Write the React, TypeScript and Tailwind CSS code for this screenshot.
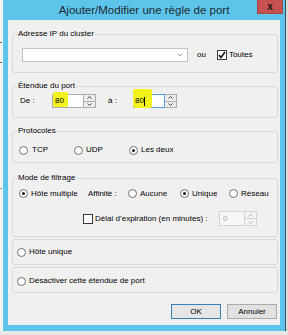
import React from "react";

function Radio({ checked }: { checked?: boolean }) {
  return (
    <span className="w-[9px] h-[9px] rounded-full border border-[#707070] bg-white flex items-center justify-center shrink-0">
      {checked ? <span className="w-[3px] h-[3px] rounded-full bg-[#1b1b1b]" /> : null}
    </span>
  );
}

function Check({ checked }: { checked?: boolean }) {
  return (
    <span className="w-[10px] h-[10px] border border-[#3a3a3a] bg-white flex items-center justify-center shrink-0">
      {checked ? (
        <svg width="8" height="8" viewBox="0 0 8 8">
          <polyline points="1,4 3,6.5 7,1" fill="none" stroke="#111" strokeWidth="1.6" />
        </svg>
      ) : null}
    </span>
  );
}

function Chev({ up, color }: { up?: boolean; color: string }) {
  return (
    <svg width="5" height="3" viewBox="0 0 5 3">
      <polyline
        points={up ? "0.5,2.5 2.5,0.5 4.5,2.5" : "0.5,0.5 2.5,2.5 4.5,0.5"}
        fill="none"
        stroke={color}
        strokeWidth="1"
      />
    </svg>
  );
}

function SpinButtons({ disabled }: { disabled?: boolean }) {
  const c = disabled ? "#b5b5b5" : "#404040";
  return (
    <div
      className={
        disabled
          ? "w-[12px] flex flex-col border border-l-0 border-[#d5d5d5] bg-[#f4f4f4]"
          : "w-[12px] flex flex-col border border-l-0 border-[#acacac] bg-[#ececec]"
      }
    >
      <div
        className={
          disabled
            ? "flex-1 flex items-center justify-center border-b border-[#d5d5d5]"
            : "flex-1 flex items-center justify-center border-b border-[#acacac]"
        }
      >
        <Chev up color={c} />
      </div>
      <div className="flex-1 flex items-center justify-center">
        <Chev color={c} />
      </div>
    </div>
  );
}

function Box({ className, label, children }: { className: string; label?: string; children?: React.ReactNode }) {
  return (
    <div className={"relative border border-[#d9d9d9] rounded-[3px] " + className}>
      {label ? (
        <span className="absolute -top-[6px] left-[4px] px-px bg-[#f0f0f0] leading-[9px]">{label}</span>
      ) : null}
      {children}
    </div>
  );
}

export default function App() {
  return (
    <div className="w-[288px] h-[335px] bg-[#e6e6e6] flex overflow-hidden font-['Liberation_Sans',Arial,sans-serif]">
      <div className="w-[3px] h-[331px] bg-[#f6f6f6] flex flex-col">
        <div className="mt-[42px] h-px w-[2px] bg-[#6a6a6a]" />
        <div className="mt-[19px] h-px w-[2px] bg-[#6a6a6a]" />
        <div className="mt-[125px] h-px w-[2px] bg-[#8a8a8a]" />
      </div>
      <div className="w-[282px] h-[331px] bg-[#5cc5e9] flex flex-col">
        <div className="relative h-[20px] flex items-center justify-center">
          <span className="text-[11.5px] leading-[20px] text-[#1c2935]">Ajouter/Modifier une règle de port</span>
          <div className="absolute right-[2px] top-0 w-[26px] h-[14px] bg-[#c75050] border border-t-0 border-[#a94545] flex items-center justify-center">
            <span className="text-[10px] leading-[10px] font-bold text-[#161616]">x</span>
          </div>
        </div>
        <div className="mx-[5px] h-[305px] bg-[#f0f0f0] flex flex-col pl-[4px] pr-[2px] text-[8px] leading-[10px] text-black">
          <Box className="mt-[14px] h-[39px] pt-[13px] pl-[9px]" label="Adresse IP du cluster">
            <div className="flex items-center h-[14px]">
              <div className="w-[166px] h-[14px] border border-[#c3c3c3] bg-white flex items-center justify-end pr-[4px]">
                <svg width="6" height="4" viewBox="0 0 6 4">
                  <polyline points="0.5,0.5 3,3 5.5,0.5" fill="none" stroke="#a8a8a8" strokeWidth="1" />
                </svg>
              </div>
              <span className="ml-[9px]">ou</span>
              <span className="ml-[11px]">
                <Check checked />
              </span>
              <span className="ml-[2px]">Toutes</span>
            </div>
          </Box>

          <Box className="mt-[13px] h-[32px] pt-[7px] pl-[7px]" label="Étendue du port">
            <div className="flex items-center h-[14px]">
              <span className="w-[32px]">De :</span>
              <div className="flex h-[14px]">
                <div className="relative w-[32px] border border-[#abadb3] bg-white flex items-center">
                  <div className="absolute left-0 -top-[3px] w-[15px] h-[15px] bg-[#f4f21c] rounded-[2px]" />
                  <span className="relative pl-[2px]">80</span>
                </div>
                <SpinButtons />
              </div>
              <span className="ml-[12px] w-[25px]">à :</span>
              <div className="flex h-[14px]">
                <div className="relative w-[32px] border border-[#569de5] bg-white flex items-center">
                  <div className="absolute -left-px -top-[6px] w-[19px] h-[19px] bg-[#f4f21c] rounded-[2px]" />
                  <span className="relative pl-[1px]">80</span>
                  <span className="relative w-px h-[9px] bg-black" />
                </div>
                <SpinButtons />
              </div>
            </div>
          </Box>

          <Box className="mt-[13px] h-[32px] pt-[13px] pl-[6px]" label="Protocoles">
            <div className="flex items-center h-[10px]">
              <div className="w-[55px] flex items-center gap-[4px]">
                <Radio />
                <span>TCP</span>
              </div>
              <div className="w-[55px] flex items-center gap-[3px]">
                <Radio />
                <span>UDP</span>
              </div>
              <div className="flex items-center gap-[3px]">
                <Radio checked />
                <span>Les deux</span>
              </div>
            </div>
          </Box>

          <Box className="mt-[15px] h-[59px] pt-[10px] pl-[6px]" label="Mode de filtrage">
            <div className="flex items-center h-[9px]">
              <div className="w-[69px] flex items-center gap-[3px]">
                <Radio checked />
                <span>Hôte multiple</span>
              </div>
              <span className="w-[40px]">Affinité :</span>
              <div className="w-[52px] flex items-center gap-[3px]">
                <Radio />
                <span>Aucune</span>
              </div>
              <div className="w-[49px] flex items-center gap-[3px]">
                <Radio checked />
                <span>Unique</span>
              </div>
              <div className="flex items-center gap-[3px]">
                <Radio />
                <span>Réseau</span>
              </div>
            </div>
            <div className="mt-[13px] h-[15px] flex items-center pl-[64px]">
              <Check />
              <span className="ml-[2px] w-[124px]">Délai d’expiration (en minutes) :</span>
              <div className="flex h-[15px]">
                <div className="w-[26px] border border-[#d5d5d5] bg-[#f7f7f7] flex items-center pl-[3px] text-[#a8a8a8]">
                  0
                </div>
                <SpinButtons disabled />
              </div>
            </div>
          </Box>

          <Box className="mt-[2px] h-[26px] pt-[7px] pl-[4px]">
            <div className="flex items-center gap-[3px] h-[10px]">
              <Radio />
              <span>Hôte unique</span>
            </div>
          </Box>

          <Box className="mt-[2px] h-[26px] pt-[8px] pl-[4px]">
            <div className="flex items-center gap-[3px] h-[10px]">
              <Radio />
              <span>Désactiver cette étendue de port</span>
            </div>
          </Box>

          <div className="mt-[11px] h-[15px] flex justify-end gap-[6px] pr-px">
            <div className="w-[50px] h-[15px] border border-[#3c7fb1] bg-[#e5e5e5] flex items-center justify-center">
              OK
            </div>
            <div className="w-[50px] h-[15px] border border-[#acacac] bg-[#e1e1e1] flex items-center justify-center">
              Annuler
            </div>
          </div>
        </div>
      </div>
      <div className="w-px h-[331px] bg-[#3d4c57]" />
      <div className="flex-1 h-[331px] bg-[#d9d9d9]" />
    </div>
  );
}
